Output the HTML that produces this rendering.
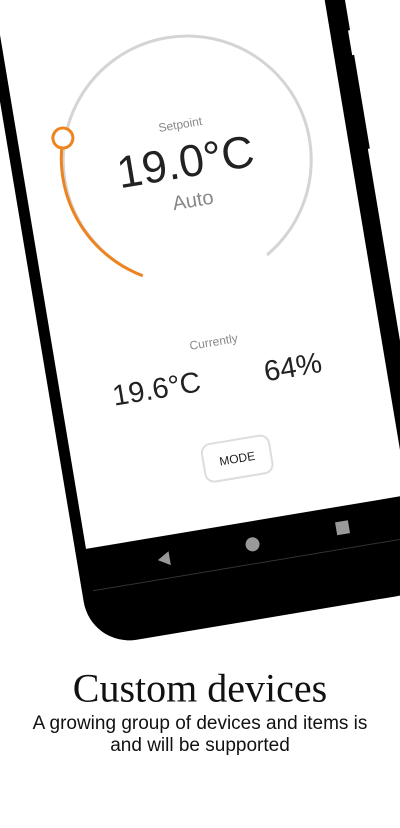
<!DOCTYPE html>
<html><head><meta charset="utf-8"><style>
html,body{margin:0;padding:0;background:#fff;width:400px;height:800px;overflow:hidden;font-family:"Liberation Sans",sans-serif}
#ph{position:absolute;left:0;top:0;width:400px;height:800px;transform:rotate(-9.5deg);transform-origin:200px 400px}
.a{position:absolute}
.t{position:absolute;transform:translate(-50%,-50%);white-space:nowrap;color:#222}
</style></head><body>
<div id="ph">
  <div class="a" style="left:52px;top:-200px;width:355px;height:826px;background:#000;border-radius:46px"></div>
  <div class="a" style="left:405px;top:20px;width:4px;height:40px;background:#000"></div>
  <div class="a" style="left:405px;top:85px;width:4px;height:95px;background:#000"></div>
  <div class="a" style="left:63px;top:-200px;width:326px;height:728px;background:#fff"></div>
  <div class="a" style="left:63px;top:570px;width:326px;height:1px;background:#333"></div>
  <div class="a" style="left:132px;top:544px;width:0;height:0;border-top:7px solid transparent;border-bottom:7px solid transparent;border-right:12px solid #999"></div>
  <div class="a" style="left:221px;top:544px;width:14px;height:14px;border-radius:50%;background:#999"></div>
  <div class="a" style="left:313px;top:543px;width:13px;height:13px;background:#999"></div>
  <svg class="a" style="left:0;top:0" width="400" height="600">
    <path d="M164 268 A124 124 0 1 1 290 268" fill="none" stroke="#d4d4d4" stroke-width="3"/>
    <path d="M108 119 A126 126 0 0 0 164 268" fill="none" stroke="#ee8420" stroke-width="3"/>
    <circle cx="108" cy="119" r="10" fill="#fff" stroke="#ee8420" stroke-width="3"/>
  </svg>
  <div class="t" style="left:226px;top:125px;font-size:12px;color:#888">Setpoint</div>
  <div class="t" style="left:225px;top:163px;font-size:45px;color:#222">19.0°C</div>
  <div class="t" style="left:226px;top:203px;font-size:20px;color:#888">Auto</div>
  <div class="t" style="left:223px;top:345px;font-size:12px;color:#888">Currently</div>
  <div class="t" style="left:159px;top:383px;font-size:29px">19.6°C</div>
  <div class="t" style="left:297px;top:384px;font-size:29px">64%</div>
  <div class="a" style="left:192px;top:444px;width:70px;height:40px;border:2px solid #ddd;border-radius:10px;box-sizing:border-box"></div>
  <div class="t" style="left:227px;top:464px;font-size:12px">MODE</div>
</div>
<div class="t" style="left:200px;top:688px;font-family:'Liberation Serif',serif;font-size:40px;color:#111">Custom devices</div>
<div class="t" style="left:200px;top:724px;font-size:19px;color:#111">A growing group of devices and items is</div>
<div class="t" style="left:200px;top:746px;font-size:19px;color:#111">and will be supported</div>
</body></html>
